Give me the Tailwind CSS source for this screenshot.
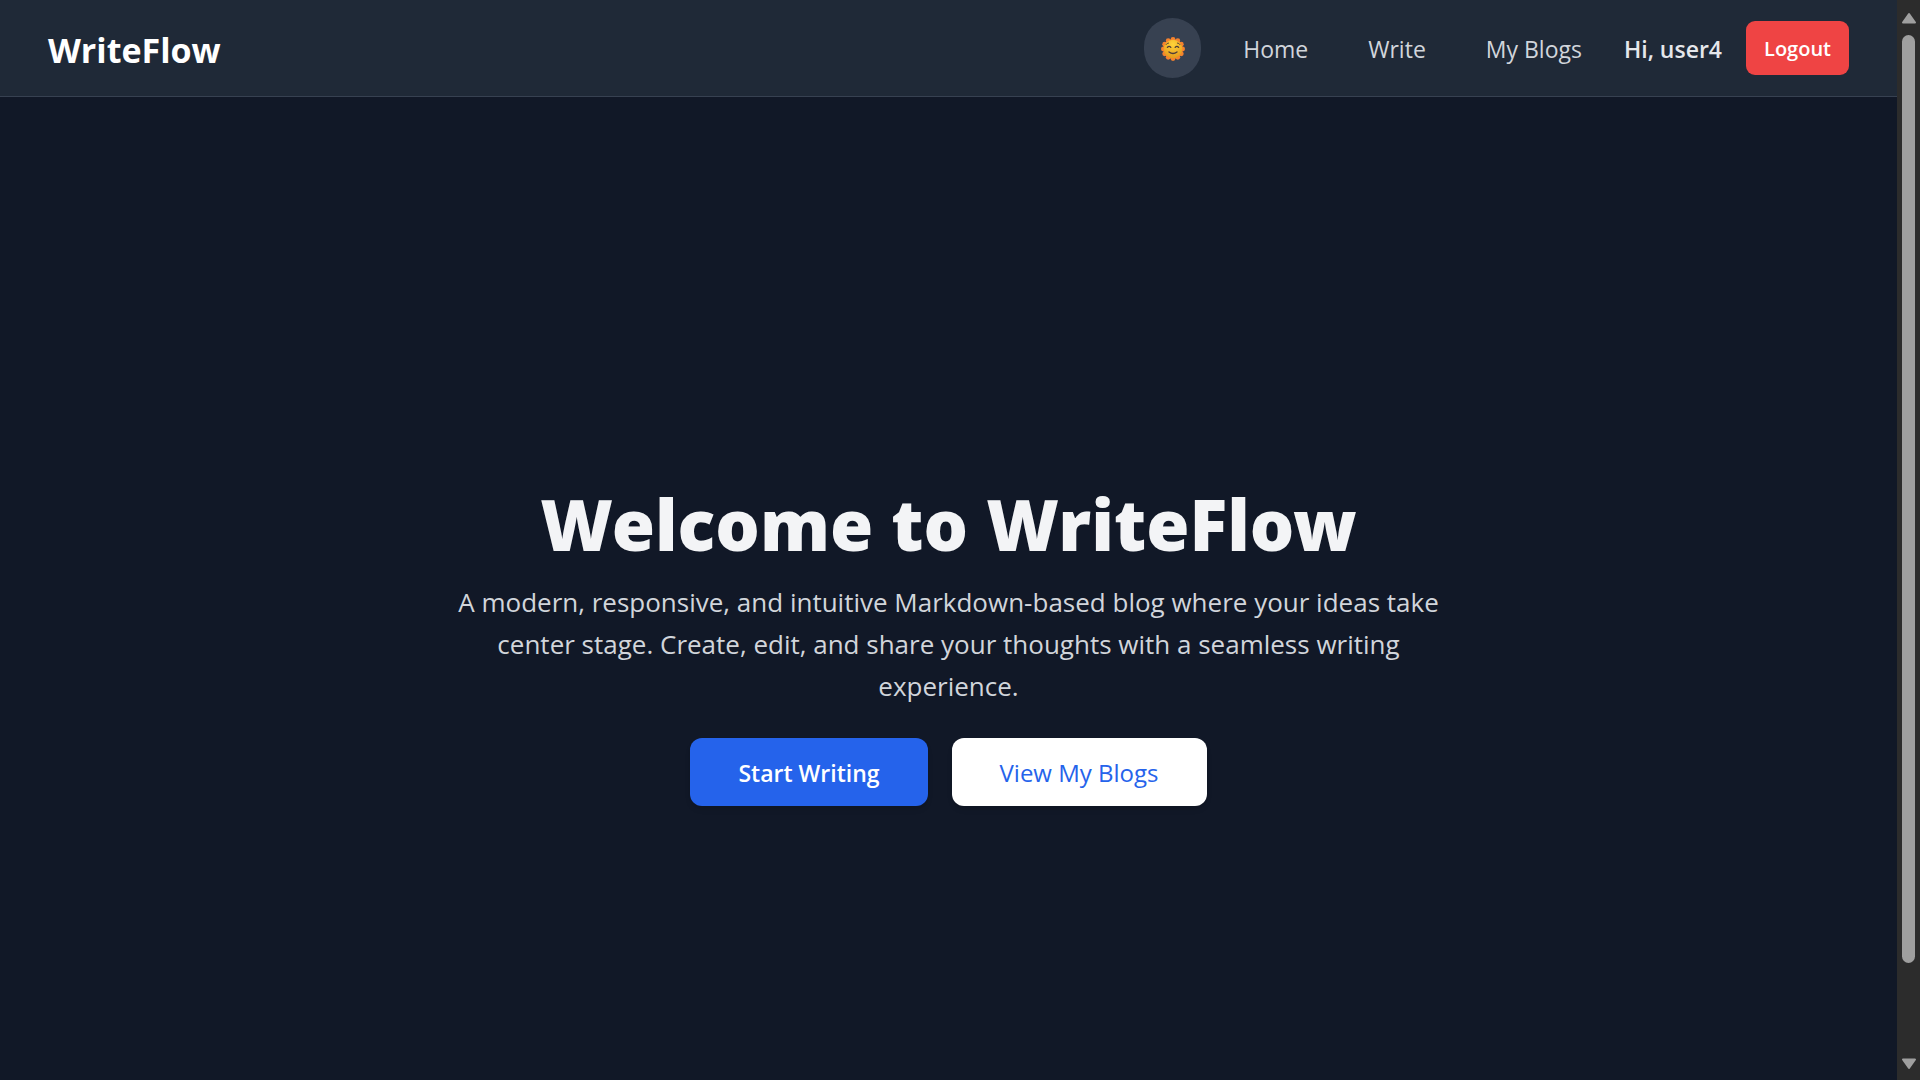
<!DOCTYPE html>
<html lang="en">
<head>
<meta charset="utf-8">
<meta name="viewport" content="width=device-width, initial-scale=1">
<title>WriteFlow</title>
<script src="https://cdn.jsdelivr.net/npm/@tailwindcss/browser@4"></script>
</head>
<body class="flex h-screen overflow-hidden bg-[#111827] font-['Open_Sans',sans-serif]">
  <div class="flex min-w-0 flex-1 flex-col">
    <header class="flex h-[97px] items-center justify-between border-b border-[#374151] bg-[#1f2937] px-12">
      <a href="#" class="pt-[3px] text-[34px] leading-10 font-bold text-white">WriteFlow</a>
      <nav class="flex items-center gap-6 text-[23px] leading-9 text-[#d1d5db]">
        <button type="button" aria-label="Switch theme" class="flex h-[60px] w-[57px] items-center justify-center rounded-full bg-[#374151] pt-0.5">
          <svg class="h-6 w-6" viewBox="0 0 24 24" aria-hidden="true">
            <defs>
              <radialGradient id="face" cx="50%" cy="25%" r="75%"><stop offset="0" stop-color="#ffd43a"/><stop offset="1" stop-color="#e59a1c"/></radialGradient>
            </defs>
            <g fill="#f5822e">
              <circle cx="12" cy="12" r="10"/>
              <circle cx="12" cy="2.4" r="2.4"/><circle cx="16.8" cy="3.7" r="2.4"/><circle cx="20.3" cy="7.2" r="2.4"/><circle cx="21.6" cy="12" r="2.4"/><circle cx="20.3" cy="16.8" r="2.4"/><circle cx="16.8" cy="20.3" r="2.4"/><circle cx="12" cy="21.6" r="2.4"/><circle cx="7.2" cy="20.3" r="2.4"/><circle cx="3.7" cy="16.8" r="2.4"/><circle cx="2.4" cy="12" r="2.4"/><circle cx="3.7" cy="7.2" r="2.4"/><circle cx="7.2" cy="3.7" r="2.4"/>
            </g>
            <circle cx="12" cy="12" r="9.3" fill="url(#face)"/>
            <g fill="none" stroke="#4d3d3a" stroke-linecap="round">
              <path stroke-width="1.3" d="M6.4 10.4q1.7-2.2 3.4 0M14.2 10.4q1.7-2.2 3.4 0M8 15q4 3 8 0"/>
              <path stroke-width=".9" d="M5 7.6q.8-1.6 2.6-1.6M19 7.6q-.8-1.6-2.6-1.6"/>
            </g>
          </svg>
        </button>
        <a href="#" class="px-[18px] pt-0.5">Home</a>
        <a href="#" class="px-[18px] pt-0.5">Write</a>
        <a href="#" class="px-[18px] pt-0.5">My Blogs</a>
        <span class="pt-0.5 font-semibold text-[#e5e7eb]">Hi, user4</span>
        <button type="button" class="h-[54px] rounded-[9px] bg-[#ef4444] px-[18px] pt-0.5 text-[20px] font-semibold text-white">Logout</button>
      </nav>
    </header>
    <main class="flex flex-1 flex-col items-center justify-center pt-[98px] text-center">
      <h1 class="mb-[21px] pt-[18px] font-['Noto_Sans','Open_Sans',sans-serif] text-[70px] leading-[72px] font-black text-[#f3f4f6]">Welcome to WriteFlow</h1>
      <p class="mb-[31px] max-w-[1008px] text-[26px] leading-[42px] text-[#d1d5db]">A modern, responsive, and intuitive Markdown-based blog where your ideas take center stage. Create, edit, and share your thoughts with a seamless writing experience.</p>
      <div class="flex gap-6 text-[23px] leading-9">
        <a href="#" class="rounded-xl bg-[#2563eb] px-12 pt-[17px] pb-[15px] font-semibold text-white shadow-md">Start Writing</a>
        <a href="#" class="rounded-xl bg-white px-12 pt-[17px] pb-[15px] text-[24px] font-medium text-[#2563eb] shadow-md">View My Blogs</a>
      </div>
    </main>
  </div>
  <div aria-hidden="true" class="flex w-[23px] flex-col items-center bg-[#2c2c2c] pt-3 pb-[10px]">
    <svg class="h-3 w-4" viewBox="0 0 16 12"><path d="M8 2 14 10.500H2Z" fill="#9f9f9f" stroke="#9f9f9f" stroke-width="2" stroke-linejoin="round"/></svg>
    <div class="mt-[11px] mb-[95px] w-[13px] flex-1 rounded-full bg-[#9f9f9f]"></div>
    <svg class="h-3 w-4" viewBox="0 0 16 12"><path d="M8 10 14 1.500H2Z" fill="#9f9f9f" stroke="#9f9f9f" stroke-width="2" stroke-linejoin="round"/></svg>
  </div>
</body>
</html>
